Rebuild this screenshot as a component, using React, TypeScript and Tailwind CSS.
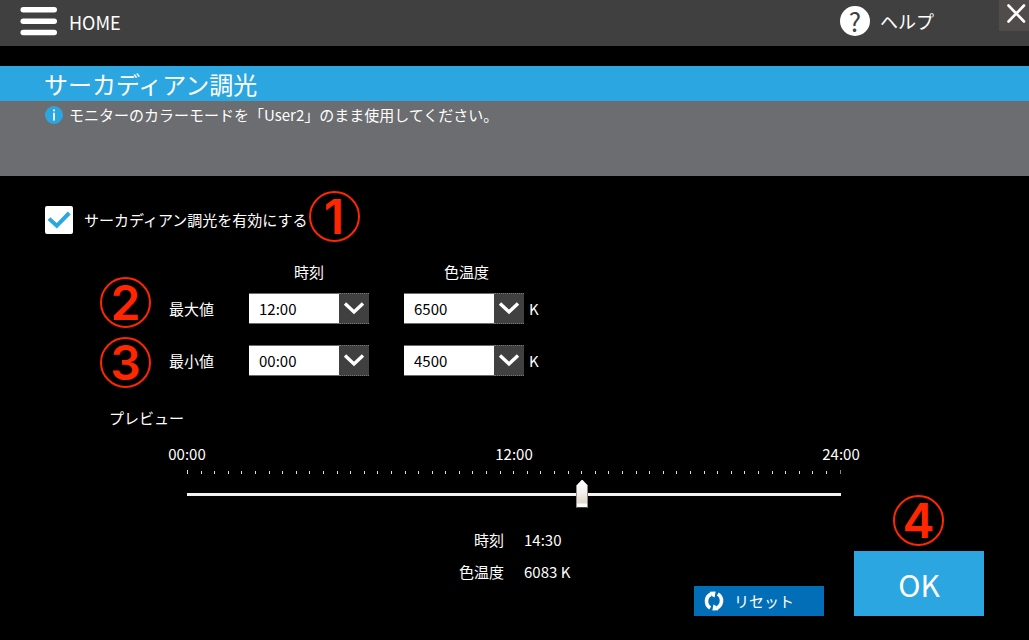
import { useState } from "react";

const HOURS = Array.from({ length: 24 }, (_, h) => `${String(h).padStart(2, "0")}:00`);
const TEMPERATURES = Array.from({ length: 13 }, (_, i) => String(4000 + i * 500));
const TICKS = Array.from({ length: 49 }, (_, i) => i);

function Badge({ value, className }: { value: string; className: string }) {
  return (
    <span
      aria-hidden="true"
      className={`pointer-events-none absolute flex size-[51px] items-center justify-center rounded-full border-2 border-[#ff2600] font-['Inter',sans-serif] text-5xl leading-none font-semibold text-[#ff2600] ${className}`}
    >
      {value}
    </span>
  );
}

type SelectBoxProps = {
  label: string;
  value: string;
  options: string[];
  onChange: (value: string) => void;
};

function SelectBox({ label, value, options, onChange }: SelectBoxProps) {
  return (
    <div className="relative h-[31px] w-[120px]">
      <select
        aria-label={label}
        value={value}
        onChange={(e) => onChange(e.target.value)}
        className="h-full w-full appearance-none border-y border-[#6c6a6a] bg-white pr-[30px] pl-[10px] text-[15px] text-black"
      >
        {options.map((option) => (
          <option key={option}>{option}</option>
        ))}
      </select>
      <span className="pointer-events-none absolute inset-y-0 right-0 flex w-[30px] items-center justify-center border-y border-dotted border-[#777] bg-[#404040]">
        <svg viewBox="0 0 30 29" className="h-[29px] w-[30px]" fill="none" stroke="white" strokeWidth="3.4">
          <path d="M6 9.6 L15 18 L24 9.6" />
        </svg>
      </span>
    </div>
  );
}

function toHours(time: string) {
  return Number(time.split(":")[0]);
}

export default function App() {
  const [enabled, setEnabled] = useState(true);
  const [maxTime, setMaxTime] = useState("12:00");
  const [minTime, setMinTime] = useState("00:00");
  const [maxTemp, setMaxTemp] = useState("6500");
  const [minTemp, setMinTemp] = useState("4500");
  const [hour, setHour] = useState(14.5);

  const fall = (toHours(minTime) - toHours(maxTime) + 24) % 24 || 24;
  const sinceMax = (hour - toHours(maxTime) + 24) % 24;
  const ratio = sinceMax <= fall ? sinceMax / fall : (24 - sinceMax) / (24 - fall);
  const temperature = Math.round(Number(maxTemp) - (Number(maxTemp) - Number(minTemp)) * ratio);
  const clock = `${String(Math.floor(hour)).padStart(2, "0")}:${hour % 1 ? "30" : "00"}`;

  const reset = () => {
    setMaxTime("12:00");
    setMinTime("00:00");
    setMaxTemp("6500");
    setMinTemp("4500");
  };

  return (
    <div className="min-h-screen bg-black pb-6 font-['Noto_Sans_CJK_JP',sans-serif] text-[15px] leading-6 text-white">
      <header className="flex h-[46px] items-start justify-between bg-[#404040] text-lg">
        <button type="button" className="flex h-[43px] items-center gap-3 pl-5">
          <svg viewBox="0 0 37 29" className="h-[29px] w-[37px]" fill="white">
            <rect x="0.5" y="0" width="36.5" height="5.5" rx="2.7" />
            <rect x="0.5" y="11.5" width="36.5" height="5.5" rx="2.7" />
            <rect x="0.5" y="22.8" width="36.5" height="5.5" rx="2.7" />
          </svg>
          HOME
        </button>
        <div className="flex items-start gap-[65px]">
          <button type="button" className="flex h-[42px] items-center gap-[10px]">
            <span className="flex size-[30px] items-center justify-center rounded-full bg-white text-[26px] leading-none text-[#404040]">
              ?
            </span>
            ヘルプ
          </button>
          <button type="button" aria-label="閉じる" className="h-[31px] w-[30px] bg-[#504c4b]">
            <svg viewBox="0 0 30 31" className="h-[31px] w-[30px]" fill="none" stroke="white" strokeWidth="2.6" strokeLinecap="round">
              <path d="M9.5 5.5 L25 21.5 M25 5.5 L9.5 21.5" />
            </svg>
          </button>
        </div>
      </header>

      <h1 className="mt-5 h-[35px] bg-[#2ca6e0] pl-11 text-2xl leading-[35px]">サーカディアン調光</h1>
      <div className="flex h-[75px] items-start gap-[6px] bg-[#6c6d70] pt-[2px] pl-[45px]">
        <svg viewBox="0 0 18 18" className="my-[3px] size-[18px]">
          <circle cx="9" cy="9" r="9" fill="#2ca6e0" />
          <path d="M8.1 3.4h1.8v1.9h-1.8zM8.1 6.8h1.8v7.6h-1.8z" fill="white" />
        </svg>
        <p>モニターのカラーモードを「User2」のまま使用してください。</p>
      </div>

      <main>
        <div className="mt-[30px] flex pl-[45px]">
          <label className="relative flex items-center gap-[11px]">
            <input
              type="checkbox"
              checked={enabled}
              onChange={(e) => setEnabled(e.target.checked)}
              className="peer size-7 appearance-none rounded-xs bg-white"
            />
            <svg
              viewBox="0 0 28 28"
              className="pointer-events-none invisible absolute left-0 size-7 peer-checked:visible"
              fill="none"
              stroke="#2ca6e0"
              strokeWidth="4"
            >
              <path d="M4 12.6 L11.8 19.8 L24.2 7" />
            </svg>
            サーカディアン調光を有効にする
            <Badge value="1" className="-top-[15px] left-full ml-[1px]" />
          </label>
        </div>

        <div className="relative mt-[26px] grid grid-cols-[80px_155px_125px_auto] justify-start gap-y-[21px] pl-[169px]">
          <span className="col-start-2 -mb-[12px] w-[120px] text-center">時刻</span>
          <span className="col-start-3 -mb-[12px] text-center">色温度</span>

          <span className="col-start-1 self-center">最大値</span>
          <SelectBox label="最大値の時刻" value={maxTime} options={HOURS} onChange={setMaxTime} />
          <SelectBox label="最大値の色温度" value={maxTemp} options={TEMPERATURES} onChange={setMaxTemp} />
          <span className="self-center">K</span>

          <span className="col-start-1 self-center">最小値</span>
          <SelectBox label="最小値の時刻" value={minTime} options={HOURS} onChange={setMinTime} />
          <SelectBox label="最小値の色温度" value={minTemp} options={TEMPERATURES} onChange={setMinTemp} />
          <span className="self-center">K</span>

          <Badge value="2" className="top-[17px] left-[100px]" />
          <Badge value="3" className="top-[77px] left-[100px]" />
        </div>

        <h2 className="mt-[30px] pl-[109px]">プレビュー</h2>

        <section className="mt-3 mr-[188px] ml-[187px]">
          <div className="-mx-10 flex justify-between">
            <span className="w-20 text-center">00:00</span>
            <span className="w-20 text-center">12:00</span>
            <span className="w-20 text-center">24:00</span>
          </div>
          <div className="mt-1 flex h-1 items-end justify-between">
            {TICKS.map((tick) => (
              <span key={tick} className="h-[3px] w-px bg-[#e8dcc8] first:h-1 last:h-1 last:bg-[#888]" />
            ))}
          </div>
          <div className="-mx-[6px] mt-[6px] flex">
            <input
              type="range"
              aria-label="プレビューの時刻"
              min={0}
              max={24}
              step={0.5}
              value={hour}
              onChange={(e) => setHour(Number(e.target.value))}
              className="h-7 w-full appearance-none bg-transparent [&::-webkit-slider-runnable-track]:h-[3px] [&::-webkit-slider-runnable-track]:bg-[linear-gradient(to_right,black_6px,#f4f3f1_6px,#f4f3f1_calc(100%-6px),black_calc(100%-6px))] [&::-webkit-slider-thumb]:-mt-[13px] [&::-webkit-slider-thumb]:h-7 [&::-webkit-slider-thumb]:w-3 [&::-webkit-slider-thumb]:appearance-none [&::-webkit-slider-thumb]:bg-[linear-gradient(to_right,#8a8684_1px,transparent_1px,transparent_11px,#8a8684_11px),linear-gradient(to_bottom,white_0,#f0efed_14px,#e8e2da_18px,#e2d8cc_23px,white_24px,white_27px,#8a8684_27px)] [&::-webkit-slider-thumb]:[clip-path:polygon(50%_0,100%_22%,100%_100%,0_100%,0_22%)]"
            />
          </div>
        </section>

        <div className="mt-5 grid">
          <dl className="col-start-1 row-start-1 grid grid-cols-2 content-start gap-x-5 gap-y-2 pr-px">
            <dt className="text-right">時刻</dt>
            <dd>{clock}</dd>
            <dt className="text-right">色温度</dt>
            <dd>{temperature} K</dd>
          </dl>
          <div className="col-start-1 row-start-1 flex items-end gap-[30px] justify-self-end pt-[23px] pr-[45px]">
            <button type="button" onClick={reset} className="flex h-[30px] w-[130px] items-center gap-[10px] bg-[#036eb8] pl-[10px]">
              <svg viewBox="0 0 20 20" className="size-5" fill="none" stroke="white" strokeWidth="3.6">
                <path d="M6.2 16.9 A7.9 7.9 0 0 1 7.2 3" />
                <path d="M13.8 3.1 A7.9 7.9 0 0 1 12.8 17" />
                <path d="M5.6 0.8 L11.6 0.6 L10.6 6.4 L8.2 5.2 Z" fill="white" stroke="none" />
                <path d="M14.4 19.2 L8.4 19.4 L9.4 13.6 L11.8 14.8 Z" fill="white" stroke="none" />
              </svg>
              リセット
            </button>
            <button type="button" className="relative h-[65px] w-[130px] bg-[#2ca6e0] text-[30px]">
              OK
              <Badge value="4" className="-top-14 left-[39px]" />
            </button>
          </div>
        </div>
      </main>
    </div>
  );
}
